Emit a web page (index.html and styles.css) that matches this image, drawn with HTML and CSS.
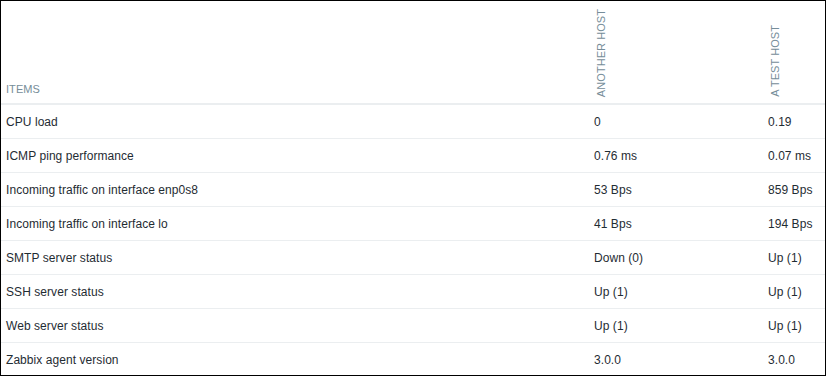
FILE: index.html
```html
<!DOCTYPE html>
<html>
<head>
<meta charset="utf-8">
<link rel="stylesheet" href="styles.css">
</head>
<body>
<div class="frame">
  <div class="head">
    <div class="th items">ITEMS</div>
    <div class="th vert"><span>ANOTHER HOST</span></div>
    <div class="th vert"><span>A TEST HOST</span></div>
  </div>
  <div class="row"><div class="td">CPU load</div><div class="td">0</div><div class="td">0.19</div></div>
  <div class="row"><div class="td">ICMP ping performance</div><div class="td">0.76 ms</div><div class="td">0.07 ms</div></div>
  <div class="row"><div class="td">Incoming traffic on interface enp0s8</div><div class="td">53 Bps</div><div class="td">859 Bps</div></div>
  <div class="row"><div class="td">Incoming traffic on interface lo</div><div class="td">41 Bps</div><div class="td">194 Bps</div></div>
  <div class="row"><div class="td">SMTP server status</div><div class="td">Down (0)</div><div class="td">Up (1)</div></div>
  <div class="row"><div class="td">SSH server status</div><div class="td">Up (1)</div><div class="td">Up (1)</div></div>
  <div class="row"><div class="td">Web server status</div><div class="td">Up (1)</div><div class="td">Up (1)</div></div>
  <div class="row last"><div class="td">Zabbix agent version</div><div class="td">3.0.0</div><div class="td">3.0.0</div></div>
</div>
</body>
</html>
```
FILE: styles.css
```css
html, body {
  margin: 0;
  padding: 0;
  background: #fff;
}
body {
  font-family: "Liberation Sans", Arial, sans-serif;
  font-size: 12px;
  color: #1f2c33;
  letter-spacing: 0.06px;
}
.frame {
  width: 826px;
  height: 376px;
  border: 1px solid #000;
  box-sizing: border-box;
  overflow: hidden;
}
.head, .row {
  display: grid;
  grid-template-columns: 588px 174px 1fr;
  box-sizing: border-box;
}
.head {
  height: 104px;
  border-bottom: 2px solid #ebeef0;
}
.th {
  display: flex;
  align-items: flex-end;
  padding: 0 5px 6px 5px;
  font-size: 11px;
  line-height: 14px;
  color: #768d99;
}
.th.items {
  padding-bottom: 7px;
}
.vert span {
  writing-mode: vertical-rl;
  transform: rotate(180deg);
  padding-left: 1px;
}
.row {
  height: 34px;
  border-bottom: 1px solid #ebeef0;
}
.row.last {
  border-bottom: none;
}
.td {
  display: flex;
  align-items: center;
  padding: 0 5px;
  white-space: nowrap;
}
```
